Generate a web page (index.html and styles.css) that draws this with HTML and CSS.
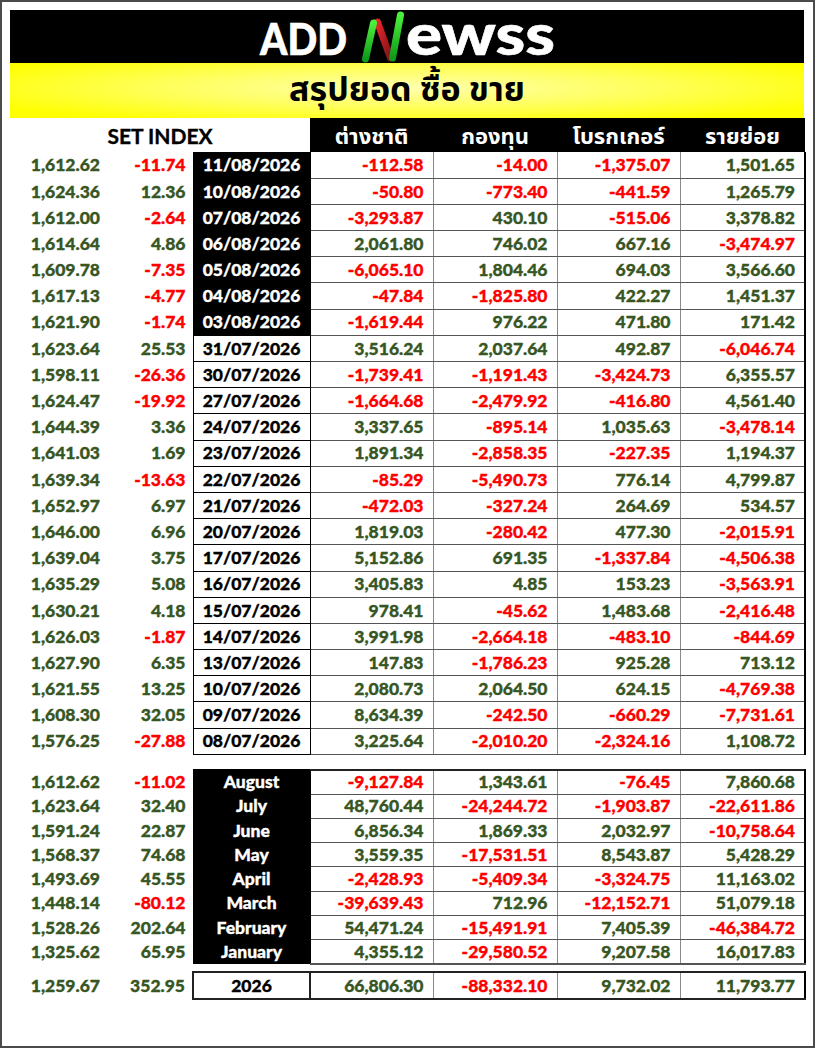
FILE: index.html
```html
<!DOCTYPE html>
<html lang="th">
<head>
<meta charset="utf-8">
<title>ADDNewss สรุปยอด ซื้อ ขาย</title>
<link rel="stylesheet" href="styles.css">
</head>
<body>
<div class="frame">
  <div class="logo">
    <svg class="logomark" width="310" height="53" viewBox="0 0 310 53" role="img" aria-label="ADDNewss">
      <defs>
        <linearGradient id="g1" x1="0" y1="0" x2="0" y2="1">
          <stop offset="0" stop-color="#4cf03c"/>
          <stop offset="1" stop-color="#0f9a1a"/>
        </linearGradient>
        <linearGradient id="r1" x1="0" y1="0" x2="1" y2="1">
          <stop offset="0" stop-color="#e8262a"/>
          <stop offset="1" stop-color="#7a1418"/>
        </linearGradient>
      </defs>
      <text class="lt" x="8" y="45" font-size="43" textLength="87" lengthAdjust="spacingAndGlyphs">ADD</text>
      <line x1="125.5" y1="12" x2="138.5" y2="48" stroke="url(#r1)" stroke-width="7" stroke-linecap="round"/>
      <line x1="113.5" y1="49" x2="121.5" y2="13" stroke="url(#g1)" stroke-width="7" stroke-linecap="round"/>
      <line x1="140.5" y1="48" x2="148.5" y2="5" stroke="url(#g1)" stroke-width="7" stroke-linecap="round"/>
      <text class="lt" x="154" y="45" font-size="58" textLength="149" lengthAdjust="spacingAndGlyphs">ewss</text>
    </svg>
  </div>
  <div class="title">สรุปยอด ซื้อ ขาย</div>

  <table class="daily">
    <colgroup><col class="w1"><col class="w2"><col class="w3"><col class="w4"><col class="w5"><col class="w6"><col class="w7"></colgroup>
    <tr class="head">
      <td colspan="3" class="seti">SET INDEX</td>
      <th>ต่างชาติ</th><th>กองทุน</th><th>โบรกเกอร์</th><th class="last">รายย่อย</th>
    </tr>
    <tr><td class="ix">1,612.62</td><td class="ch n">-11.74</td><td class="dt dk">11/08/2026</td><td class="v n">-112.58</td><td class="v n">-14.00</td><td class="v n">-1,375.07</td><td class="v last p">1,501.65</td></tr>
    <tr><td class="ix">1,624.36</td><td class="ch p">12.36</td><td class="dt dk">10/08/2026</td><td class="v n">-50.80</td><td class="v n">-773.40</td><td class="v n">-441.59</td><td class="v last p">1,265.79</td></tr>
    <tr><td class="ix">1,612.00</td><td class="ch n">-2.64</td><td class="dt dk">07/08/2026</td><td class="v n">-3,293.87</td><td class="v p">430.10</td><td class="v n">-515.06</td><td class="v last p">3,378.82</td></tr>
    <tr><td class="ix">1,614.64</td><td class="ch p">4.86</td><td class="dt dk">06/08/2026</td><td class="v p">2,061.80</td><td class="v p">746.02</td><td class="v p">667.16</td><td class="v last n">-3,474.97</td></tr>
    <tr><td class="ix">1,609.78</td><td class="ch n">-7.35</td><td class="dt dk">05/08/2026</td><td class="v n">-6,065.10</td><td class="v p">1,804.46</td><td class="v p">694.03</td><td class="v last p">3,566.60</td></tr>
    <tr><td class="ix">1,617.13</td><td class="ch n">-4.77</td><td class="dt dk">04/08/2026</td><td class="v n">-47.84</td><td class="v n">-1,825.80</td><td class="v p">422.27</td><td class="v last p">1,451.37</td></tr>
    <tr><td class="ix">1,621.90</td><td class="ch n">-1.74</td><td class="dt dk">03/08/2026</td><td class="v n">-1,619.44</td><td class="v p">976.22</td><td class="v p">471.80</td><td class="v last p">171.42</td></tr>
    <tr><td class="ix">1,623.64</td><td class="ch p">25.53</td><td class="dt">31/07/2026</td><td class="v p">3,516.24</td><td class="v p">2,037.64</td><td class="v p">492.87</td><td class="v last n">-6,046.74</td></tr>
    <tr><td class="ix">1,598.11</td><td class="ch n">-26.36</td><td class="dt">30/07/2026</td><td class="v n">-1,739.41</td><td class="v n">-1,191.43</td><td class="v n">-3,424.73</td><td class="v last p">6,355.57</td></tr>
    <tr><td class="ix">1,624.47</td><td class="ch n">-19.92</td><td class="dt">27/07/2026</td><td class="v n">-1,664.68</td><td class="v n">-2,479.92</td><td class="v n">-416.80</td><td class="v last p">4,561.40</td></tr>
    <tr><td class="ix">1,644.39</td><td class="ch p">3.36</td><td class="dt">24/07/2026</td><td class="v p">3,337.65</td><td class="v n">-895.14</td><td class="v p">1,035.63</td><td class="v last n">-3,478.14</td></tr>
    <tr><td class="ix">1,641.03</td><td class="ch p">1.69</td><td class="dt">23/07/2026</td><td class="v p">1,891.34</td><td class="v n">-2,858.35</td><td class="v n">-227.35</td><td class="v last p">1,194.37</td></tr>
    <tr><td class="ix">1,639.34</td><td class="ch n">-13.63</td><td class="dt">22/07/2026</td><td class="v n">-85.29</td><td class="v n">-5,490.73</td><td class="v p">776.14</td><td class="v last p">4,799.87</td></tr>
    <tr><td class="ix">1,652.97</td><td class="ch p">6.97</td><td class="dt">21/07/2026</td><td class="v n">-472.03</td><td class="v n">-327.24</td><td class="v p">264.69</td><td class="v last p">534.57</td></tr>
    <tr><td class="ix">1,646.00</td><td class="ch p">6.96</td><td class="dt">20/07/2026</td><td class="v p">1,819.03</td><td class="v n">-280.42</td><td class="v p">477.30</td><td class="v last n">-2,015.91</td></tr>
    <tr><td class="ix">1,639.04</td><td class="ch p">3.75</td><td class="dt">17/07/2026</td><td class="v p">5,152.86</td><td class="v p">691.35</td><td class="v n">-1,337.84</td><td class="v last n">-4,506.38</td></tr>
    <tr><td class="ix">1,635.29</td><td class="ch p">5.08</td><td class="dt">16/07/2026</td><td class="v p">3,405.83</td><td class="v p">4.85</td><td class="v p">153.23</td><td class="v last n">-3,563.91</td></tr>
    <tr><td class="ix">1,630.21</td><td class="ch p">4.18</td><td class="dt">15/07/2026</td><td class="v p">978.41</td><td class="v n">-45.62</td><td class="v p">1,483.68</td><td class="v last n">-2,416.48</td></tr>
    <tr><td class="ix">1,626.03</td><td class="ch n">-1.87</td><td class="dt">14/07/2026</td><td class="v p">3,991.98</td><td class="v n">-2,664.18</td><td class="v n">-483.10</td><td class="v last n">-844.69</td></tr>
    <tr><td class="ix">1,627.90</td><td class="ch p">6.35</td><td class="dt">13/07/2026</td><td class="v p">147.83</td><td class="v n">-1,786.23</td><td class="v p">925.28</td><td class="v last p">713.12</td></tr>
    <tr><td class="ix">1,621.55</td><td class="ch p">13.25</td><td class="dt">10/07/2026</td><td class="v p">2,080.73</td><td class="v p">2,064.50</td><td class="v p">624.15</td><td class="v last n">-4,769.38</td></tr>
    <tr><td class="ix">1,608.30</td><td class="ch p">32.05</td><td class="dt">09/07/2026</td><td class="v p">8,634.39</td><td class="v n">-242.50</td><td class="v n">-660.29</td><td class="v last n">-7,731.61</td></tr>
    <tr><td class="ix">1,576.25</td><td class="ch n">-27.88</td><td class="dt">08/07/2026</td><td class="v p">3,225.64</td><td class="v n">-2,010.20</td><td class="v n">-2,324.16</td><td class="v last p">1,108.72</td></tr>
  </table>

  <table class="months">
    <colgroup><col class="w1"><col class="w2"><col class="w3"><col class="w4"><col class="w5"><col class="w6"><col class="w7"></colgroup>
    <tr><td class="ix">1,612.62</td><td class="ch n">-11.02</td><td class="dt dk">August</td><td class="v n">-9,127.84</td><td class="v p">1,343.61</td><td class="v n">-76.45</td><td class="v last p">7,860.68</td></tr>
    <tr><td class="ix">1,623.64</td><td class="ch p">32.40</td><td class="dt dk">July</td><td class="v p">48,760.44</td><td class="v n">-24,244.72</td><td class="v n">-1,903.87</td><td class="v last n">-22,611.86</td></tr>
    <tr><td class="ix">1,591.24</td><td class="ch p">22.87</td><td class="dt dk">June</td><td class="v p">6,856.34</td><td class="v p">1,869.33</td><td class="v p">2,032.97</td><td class="v last n">-10,758.64</td></tr>
    <tr><td class="ix">1,568.37</td><td class="ch p">74.68</td><td class="dt dk">May</td><td class="v p">3,559.35</td><td class="v n">-17,531.51</td><td class="v p">8,543.87</td><td class="v last p">5,428.29</td></tr>
    <tr><td class="ix">1,493.69</td><td class="ch p">45.55</td><td class="dt dk">April</td><td class="v n">-2,428.93</td><td class="v n">-5,409.34</td><td class="v n">-3,324.75</td><td class="v last p">11,163.02</td></tr>
    <tr><td class="ix">1,448.14</td><td class="ch n">-80.12</td><td class="dt dk">March</td><td class="v n">-39,639.43</td><td class="v p">712.96</td><td class="v n">-12,152.71</td><td class="v last p">51,079.18</td></tr>
    <tr><td class="ix">1,528.26</td><td class="ch p">202.64</td><td class="dt dk">February</td><td class="v p">54,471.24</td><td class="v n">-15,491.91</td><td class="v p">7,405.39</td><td class="v last n">-46,384.72</td></tr>
    <tr><td class="ix">1,325.62</td><td class="ch p">65.95</td><td class="dt dk">January</td><td class="v p">4,355.12</td><td class="v n">-29,580.52</td><td class="v p">9,207.58</td><td class="v last p">16,017.83</td></tr>
  </table>

  <table class="total">
    <colgroup><col class="w1"><col class="w2"><col class="w3"><col class="w4"><col class="w5"><col class="w6"><col class="w7"></colgroup>
    <tr><td class="ix">1,259.67</td><td class="ch p">352.95</td><td class="dt yr">2026</td><td class="v p">66,806.30</td><td class="v n">-88,332.10</td><td class="v p">9,732.02</td><td class="v last p">11,793.77</td></tr>
  </table>
</div>
</body>
</html>
```

FILE: styles.css
```css
* { box-sizing: border-box; }
html, body { margin: 0; padding: 0; background: #fff; }
body {
  font-family: "Lato", "Noto Sans Thai", "Noto Sans Thai UI", "Noto Sans", "DejaVu Sans", sans-serif;
  font-weight: 700;
}
.frame {
  width: 815px;
  height: 1048px;
  border: 2px solid #4b4b4b;
  padding: 8px 9px 0 8px;
}
.logo {
  height: 53px;
  background: #000;
  display: flex;
  align-items: center;
  justify-content: center;
}
.logomark { display: block; }
.lt {
  font-family: "Lato", sans-serif;
  font-weight: 900;
  fill: #fff;
  stroke: #fff;
  stroke-width: 0.6px;
}
.title {
  height: 55px;
  background: radial-gradient(ellipse 60% 70% at 50% 45%, #ffffb0 0%, #ffff55 55%, #ffff00 100%);
  display: flex;
  align-items: center;
  justify-content: center;
  font-size: 34px;
  color: #000;
}
table {
  border-collapse: collapse;
  table-layout: fixed;
  width: 795px;
}
.w1 { width: 95px; }
.w2 { width: 88px; }
.w3 { width: 117px; }
.w4 { width: 123px; }
.w5 { width: 124px; }
.w6 { width: 123px; }
.w7 { width: 125px; }
td, th {
  padding: 0;
  white-space: nowrap;
  font-size: 17.5px;
  line-height: 1;
  font-weight: 900;
  -webkit-text-stroke: 0.35px currentColor;
}
.daily tr { height: 26.2px; }
.daily tr.head { height: 33px; }
.head th {
  background: #000;
  color: #fff;
  font-size: 22px;
  font-weight: 700;
  text-align: center;
  border-top: 2px solid #000;
  -webkit-text-stroke: 0;
}
.seti { text-align: center; font-size: 21px; font-weight: 700; color: #000; }
.months tr { height: 24.25px; }
.total tr { height: 27px; }
.ix { text-align: right; padding-right: 5px; color: #375623; }
.ch { text-align: right; padding-right: 7px; }
.p { color: #375623; }
.n { color: #ff0000; }
.dt {
  text-align: center;
  color: #000;
  background: #fff;
  border: 1px solid #000;
}
.dt.dk { background: #000; color: #fff; }
.v {
  text-align: right;
  padding-right: 9px;
  border-left: 1px solid #8a8a8a;
  border-bottom: 1px solid #555;
}
.v.last { border-right: 2px solid #000; }
.months { margin-top: 14px; }
.months tr:first-child td.v { border-top: 2px solid #222; }
.months tr:last-child td.v { border-bottom: 2px solid #555; }
.total { margin-top: 6px; }
.total td.v { border-top: 2px solid #222; border-bottom: 2px solid #222; }
.total .yr { border: 2px solid #222; }
```
